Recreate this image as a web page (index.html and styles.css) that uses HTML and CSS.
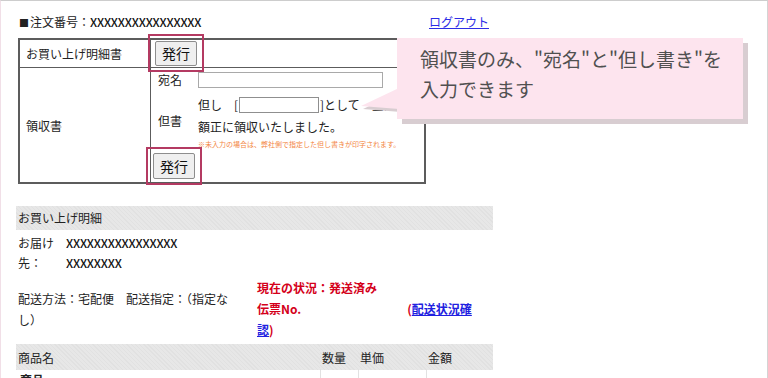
FILE: index.html
```html
<!DOCTYPE html>
<html lang="ja">
<head>
<meta charset="utf-8">
<link rel="stylesheet" href="styles.css">
</head>
<body>
<div class="page">
  <div class="top">
    <span class="order"><span class="sq">■</span>注文番号：<span class="xs">XXXXXXXXXXXXXXXX</span></span>
    <a class="logout" href="#">ログアウト</a>
  </div>

  <table class="receipt">
    <tr class="r1">
      <th>お買い上げ明細書</th>
      <td class="c1"><span class="hl"><button class="btn">発行</button></span></td>
    </tr>
    <tr class="r2">
      <th>領収書</th>
      <td class="c2">
        <div class="form">
          <div class="lbl la">宛名</div>
          <div class="val va"><input class="in-name" type="text"></div>
          <div class="lbl lb">但書</div>
          <div class="val vb">
            <div class="ln first">但し　[<input class="in-note" type="text">]として　金額</div>
            <div class="ln">額正に領収いたしました。</div>
            <div class="note">※未入力の場合は、弊社側で指定した但し書きが印字されます。</div>
          </div>
        </div>
        <span class="hl h2"><button class="btn b2">発行</button></span>
      </td>
    </tr>
  </table>

  <div class="detail">
    <div class="bar">お買い上げ明細</div>
    <div class="dest">
      <div class="dlbl">お届け先：</div>
      <div class="dval xs">XXXXXXXXXXXXXXXX<br>XXXXXXXX</div>
    </div>
    <div class="ship">
      <div class="method">配送方法：宅配便　配送指定：（指定なし）</div>
      <div class="status">現在の状況：発送済み<br>伝票No.<span class="gap"></span>(<a href="#">配送状況確<br>認</a>)</div>
    </div>
    <table class="items">
      <tr class="ih">
        <th class="w-name">商品名</th>
        <th class="w-qty">数量</th>
        <th class="w-price">単価</th>
        <th class="w-sum">金額</th>
      </tr>
      <tr class="ib">
        <td><b>商品</b></td>
        <td></td>
        <td></td>
        <td></td>
      </tr>
    </table>
  </div>

  <div class="callout">
    <svg class="tail" width="40" height="26" viewBox="0 0 40 26">
      <polygon points="40,3 40,24 2,21" fill="#d8cdd1"/>
      <polygon points="38,0 38,21 0,18" fill="#fde4ee"/>
    </svg>
    <div class="bubble">領収書のみ、"宛名"と"但し書き"を<br>入力できます</div>
  </div>
</div>
</body>
</html>
```

FILE: styles.css
```css
html, body {
  margin: 0;
  padding: 0;
  background: #fff;
}
body {
  font-family: "Noto Sans CJK JP", "Noto Sans", sans-serif;
  font-size: 12px;
  color: #222;
}
.page {
  position: relative;
  width: 766px;
  height: 377px;
  overflow: hidden;
  border-top: 1px solid #cdcdcd;
  border-left: 1px solid #f1dfe7;
  border-right: 1px solid #d4d4d4;
}
.top {
  display: flex;
  justify-content: space-between;
  width: 470px;
  margin-left: 18px;
  padding-top: 11px;
  line-height: 20px;
}
.sq {
  font-size: 10px;
  margin-right: 1px;
}
.xs {
  font-family: "Noto Sans CJK JP", sans-serif;
  font-weight: 500;
  color: #111;
  letter-spacing: -0.2px;
}
.logout {
  color: #2d2de6;
  text-decoration: underline;
}
.receipt {
  margin: 5px 0 0 17px;
  width: 408px;
  border: 2px solid #5c5c5c;
  border-spacing: 0;
}
.receipt th {
  width: 124px;
  text-align: left;
  font-weight: normal;
  padding: 0 0 0 6px;
  border-right: 1px solid #5c5c5c;
}
.r1 th, .r1 td {
  border-bottom: 1px solid #5c5c5c;
  height: 27px;
}
.c1 {
  padding: 0 0 0 4px;
  vertical-align: top;
}
.c2 {
  padding: 0 2px 3px 2px;
  vertical-align: top;
}
.hl {
  position: relative;
  display: inline-block;
}
.hl::after {
  content: "";
  position: absolute;
  left: -7px;
  right: -7px;
  top: -6px;
  bottom: -6px;
  border: 2px solid #b43a62;
}
.h2 {
  margin-top: 3px;
}
.btn {
  display: block;
  font-family: "Noto Sans CJK JP", sans-serif;
  font-size: 14px;
  height: 25px;
  padding: 0 6px;
  line-height: 23px;
  background: #efefef;
  border: 1px solid #8d8d8d;
  border-radius: 2px;
  color: #111;
  margin-top: 1px;
}
.b2 {
  margin-top: 0;
  height: 26px;
}
.form {
  display: grid;
  grid-template-columns: 40px 1fr;
  margin-left: 5px;
}
.lbl {
  line-height: 22px;
}
.la, .va {
  padding-top: 1px;
}
.lb {
  align-self: center;
}
.va {
  display: flex;
  align-items: center;
  height: 22px;
}
.in-name {
  width: 181px;
  height: 12px;
  border: 1px solid #a9a9a9;
  padding: 1px;
  margin: 0;
}
.vb {
  margin-top: 3px;
}
.ln {
  line-height: 22px;
  white-space: nowrap;
}
.ln.first {
  display: flex;
  align-items: center;
}
.in-note {
  width: 76px;
  height: 12px;
  border: 1px solid #8f8f8f;
  padding: 1px;
  margin: 0 1px;
}
.note {
  font-size: 7px;
  line-height: 12px;
  color: #f3863f;
  white-space: nowrap;
}
.detail {
  width: 477px;
  margin: 22px 0 0 15px;
}
.bar, .ih th {
  background-color: #e4e4e4;
  background-image: repeating-linear-gradient(45deg, #e1e1e1 0 1px, #e7e7e7 1px 3px);
}
.bar {
  height: 24px;
  line-height: 24px;
  padding-left: 2px;
}
.dest {
  display: grid;
  grid-template-columns: 48px 1fr;
  margin-top: 3px;
  line-height: 20px;
  padding-left: 2px;
}
.dlbl {
  width: 40px;
}
.ship {
  display: flex;
  align-items: center;
  margin-top: 4px;
  padding-left: 2px;
}
.method {
  width: 220px;
  margin-right: 19px;
  line-height: 21px;
  word-break: break-all;
}
.status {
  color: #d4001a;
  font-weight: bold;
  line-height: 21px;
}
.status a {
  color: #2020e0;
  text-decoration: underline;
}
.gap {
  display: inline-block;
  width: 106px;
}
.items {
  width: 477px;
  margin-top: 4px;
  border-spacing: 0;
}
.items th {
  text-align: left;
  font-weight: normal;
  height: 26px;
  padding: 0 0 0 2px;
}
.items td {
  height: 20px;
  padding: 0 0 0 4px;
  vertical-align: top;
  line-height: 20px;
}
.ib td + td {
  border-left: 1px solid #e2e2e2;
}
.w-name { width: 302px; }
.w-qty { width: 36px; }
.w-price { width: 66px; }
.callout {
  position: absolute;
  left: 360px;
  top: 37px;
}
.tail {
  position: absolute;
  left: 0;
  top: 50px;
}
.bubble {
  margin-left: 36px;
  width: 346px;
  height: 81px;
  box-sizing: border-box;
  padding: 6px 0 0 23px;
  background: #fde4ee;
  box-shadow: 5px 5px 0 #d8cdd1;
  color: #505050;
  font-size: 19px;
  line-height: 30px;
  position: relative;
}
```
